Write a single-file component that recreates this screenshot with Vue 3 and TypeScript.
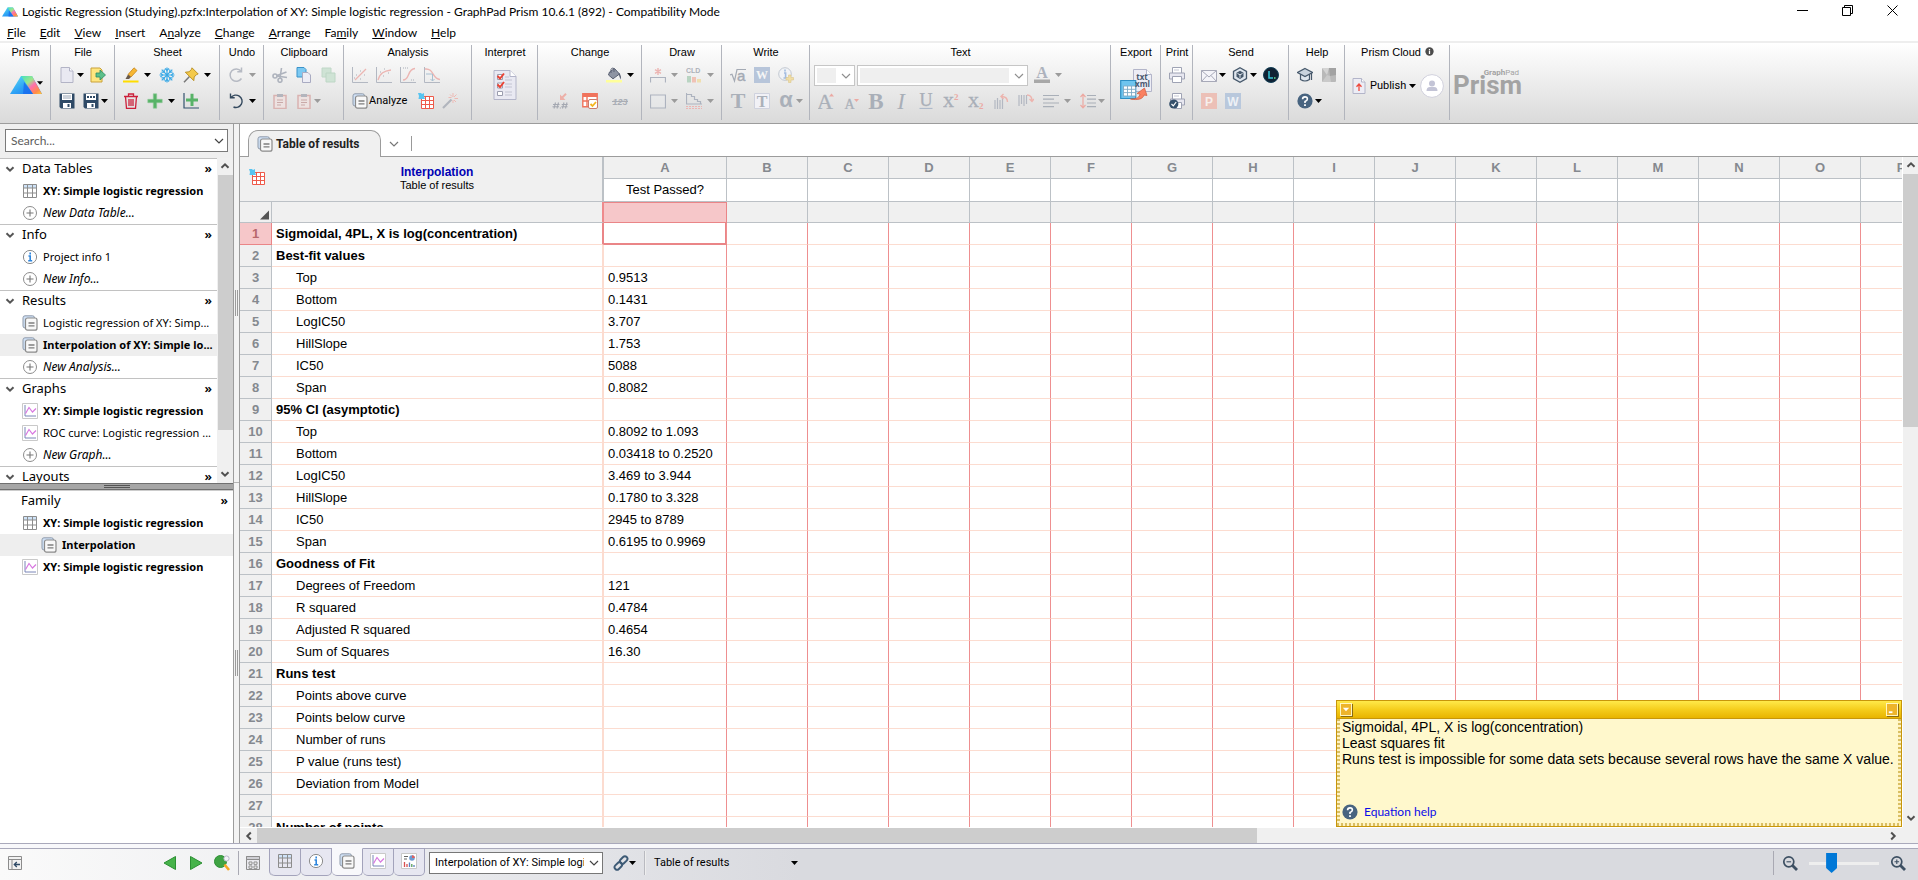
<script setup lang="ts">
import { ref } from 'vue'

interface Tool { icon: string; name: string; caret?: 'wide' | 'tight'; faded?: boolean; label?: string }
interface Group { id: string; title: string; rows: Tool[][] }
interface Item { icon: string; text: string; kind?: 'bold' | 'new'; active?: boolean; nested?: boolean }
interface Section { title: string; items: Item[] }
interface Row { label: string; value?: string; head?: boolean }

const t = (icon: string, name: string, caret?: 'wide' | 'tight', faded = false, label?: string): Tool =>
  ({ icon, name, caret, faded, label })

const menus: [string, string, string][] = [
  ['', 'F', 'ile'], ['', 'E', 'dit'], ['', 'V', 'iew'], ['', 'I', 'nsert'], ['A', 'n', 'alyze'],
  ['', 'C', 'hange'], ['', 'A', 'rrange'], ['Fa', 'm', 'ily'], ['', 'W', 'indow'], ['', 'H', 'elp'],
]

const leftGroups: Group[] = [
  { id: 'file', title: 'File', rows: [
    [t('doc', 'New', 'tight'), t('open', 'Open')],
    [t('save', 'Save'), t('saveas', 'Save as', 'tight')],
  ] },
  { id: 'sheet', title: 'Sheet', rows: [
    [t('marker', 'Highlight', 'wide'), t('snow', 'Freeze'), t('pin', 'Pin', 'wide')],
    [t('trash', 'Delete'), t('plus', 'New sheet', 'wide'), t('plusaxes', 'New graph')],
  ] },
  { id: 'undo', title: 'Undo', rows: [
    [t('redo', 'Redo', 'wide', true)],
    [t('undo', 'Undo', 'wide')],
  ] },
  { id: 'clip', title: 'Clipboard', rows: [
    [t('cut', 'Cut'), t('copy', 'Copy'), t('dup', 'Duplicate')],
    [t('paste', 'Paste'), t('paste', 'Paste special', 'tight', true)],
  ] },
  { id: 'analysis', title: 'Analysis', rows: [
    [t('fit1', 'Linear fit'), t('fit2', 'Curve fit'), t('fit3', 'Sigmoid fit'), t('fit4', 'Interpolate fit')],
    [t('results', 'Analyze', undefined, false, 'Analyze'), t('redtable', 'Analysis table'), t('wand', 'Wizard')],
  ] },
  { id: 'interpret', title: 'Interpret', rows: [] },
  { id: 'change', title: 'Change', rows: [
    [t('bucket', 'Fill', 'wide')],
    [t('decimals', 'Decimal format'), t('format', 'Format'), t('exclude', 'Exclude values')],
  ] },
  { id: 'draw', title: 'Draw', rows: [
    [t('bracket', 'Bracket', 'wide', true), t('cld', 'Letters display', 'wide', true)],
    [t('rect', 'Rectangle', 'wide', true), t('steps', 'Survival', 'wide', true)],
  ] },
  { id: 'write', title: 'Write', rows: [
    [t('root', 'Equation'), t('word', 'Word object'), t('infoadd', 'Add info')],
    [t('tee', 'Text'), t('teebox', 'Text box'), t('alpha', 'Symbol', 'tight', true)],
  ] },
]

const textTools: Tool[] = [
  t('bigger', 'Grow font'), t('smaller', 'Shrink font'), t('bold', 'Bold'), t('italic', 'Italic'),
  t('underline', 'Underline'), t('sup', 'Superscript'), t('sub', 'Subscript'), t('rotl', 'Rotate left'),
  t('rotr', 'Rotate right'), t('align', 'Align', 'wide', true), t('spacing', 'Line spacing', 'tight', true),
]

const rightGroups: Group[] = [
  { id: 'print', title: 'Print', rows: [[t('printer', 'Print')], [t('printok', 'Print all')]] },
  { id: 'send', title: 'Send', rows: [
    [t('mail', 'Mail', 'tight'), t('hex', 'Send to app', 'tight'), t('labarchives', 'LabArchives')],
    [t('ppt', 'PowerPoint'), t('wordlight', 'Word')],
  ] },
  { id: 'help', title: 'Help', rows: [
    [t('cap', 'Learn'), t('gem', 'Prism Academy')],
    [t('question', 'Help', 'tight')],
  ] },
]

const sections: Section[] = [
  { title: 'Data Tables', items: [
    { icon: 'sheet', text: 'XY: Simple logistic regression', kind: 'bold' },
    { icon: 'add', text: 'New Data Table...', kind: 'new' },
  ] },
  { title: 'Info', items: [
    { icon: 'info', text: 'Project info 1' },
    { icon: 'add', text: 'New Info...', kind: 'new' },
  ] },
  { title: 'Results', items: [
    { icon: 'results', text: 'Logistic regression of XY: Simp...' },
    { icon: 'results', text: 'Interpolation of XY: Simple lo...', kind: 'bold', active: true },
    { icon: 'add', text: 'New Analysis...', kind: 'new' },
  ] },
  { title: 'Graphs', items: [
    { icon: 'graph', text: 'XY: Simple logistic regression', kind: 'bold' },
    { icon: 'graph', text: 'ROC curve: Logistic regression ...' },
    { icon: 'add', text: 'New Graph...', kind: 'new' },
  ] },
  { title: 'Layouts', items: [] },
]

const family: Item[] = [
  { icon: 'sheet', text: 'XY: Simple logistic regression', kind: 'bold' },
  { icon: 'results', text: 'Interpolation', kind: 'bold', active: true, nested: true },
  { icon: 'graph', text: 'XY: Simple logistic regression', kind: 'bold' },
]

const columns = 'BCDEFGHIJKLMNOP'.split('')

const rows: Row[] = [
  { label: 'Sigmoidal, 4PL, X is log(concentration)', head: true },
  { label: 'Best-fit values', head: true },
  { label: 'Top', value: '0.9513' },
  { label: 'Bottom', value: '0.1431' },
  { label: 'LogIC50', value: '3.707' },
  { label: 'HillSlope', value: '1.753' },
  { label: 'IC50', value: '5088' },
  { label: 'Span', value: '0.8082' },
  { label: '95% CI (asymptotic)', head: true },
  { label: 'Top', value: '0.8092 to 1.093' },
  { label: 'Bottom', value: '0.03418 to 0.2520' },
  { label: 'LogIC50', value: '3.469 to 3.944' },
  { label: 'HillSlope', value: '0.1780 to 3.328' },
  { label: 'IC50', value: '2945 to 8789' },
  { label: 'Span', value: '0.6195 to 0.9969' },
  { label: 'Goodness of Fit', head: true },
  { label: 'Degrees of Freedom', value: '121' },
  { label: 'R squared', value: '0.4784' },
  { label: 'Adjusted R squared', value: '0.4654' },
  { label: 'Sum of Squares', value: '16.30' },
  { label: 'Runs test', head: true },
  { label: 'Points above curve' },
  { label: 'Points below curve' },
  { label: 'Number of runs' },
  { label: 'P value (runs test)' },
  { label: 'Deviation from Model' },
  { label: '' },
  { label: 'Number of points', head: true },
]

const sheetTabs = ['sheet', 'info', 'results', 'graph', 'layout']
const search = ref('')
const zoom = ref(29)
</script>

<template>
  <div class="app">
    <svg class="defs" aria-hidden="true">
      <defs>
        <linearGradient id="pl" x1="0" y1="0" x2="1" y2="1"><stop offset="0" stop-color="#5fe0f0" /><stop offset=".5" stop-color="#2fa4f5" /><stop offset="1" stop-color="#1c6ff2" /></linearGradient>
        <linearGradient id="pr" x1="0" y1="0" x2="1" y2="1"><stop offset="0" stop-color="#43e0c0" /><stop offset=".35" stop-color="#9be88a" /><stop offset=".55" stop-color="#ff6fae" /><stop offset=".8" stop-color="#ff8a4a" /><stop offset="1" stop-color="#ffc83c" /></linearGradient>
      </defs>
      <symbol id="prism" viewBox="0 0 32 18"><path d="M11 0H22L32 18H0z" fill="url(#pl)" /><path d="M11 0H22L32 18H23z" fill="url(#pr)" /><path d="M14 6L23 18H13z" fill="#1769ee" opacity=".75" /></symbol>
    </svg>
    <svg class="icons" aria-hidden="true">
      <symbol id="doc" viewBox="0 0 16 16"><path d="M2 .5h8.500l3.500 3.500V15.500H2z" fill="#e9e9f2" stroke="#b3b4c6" /><path d="M10.500 .5v3.500H14" fill="#fff" stroke="#b3b4c6" /></symbol>
      <symbol id="open" viewBox="0 0 16 16"><path d="M1 1h9l2 2v12H1z" fill="#ffe680" stroke="#c9a13a" /><path d="M6 6h4V3l5.500 5-5.500 5v-3H6z" fill="#5cc08a" stroke="#2c8a64" stroke-width=".8" /></symbol>
      <symbol id="save" viewBox="0 0 16 16"><path d="M.5 .5h15v15H2l-1.500-1.500z" fill="#2f4a66" /><path d="M3 1h10v6H3z" fill="#fff" /><path d="M4 3h8M4 5h8" stroke="#9aa6b5" /><path d="M4 10h8v5H4z" fill="#fff" /><path d="M8.500 11h2v3h-2z" fill="#2f4a66" /></symbol>
      <symbol id="saveas" viewBox="0 0 16 16"><path d="M.5 .5h15v15H2l-1.500-1.500z" fill="#2f4a66" /><path d="M3 1h10v6H3z" fill="#fff" /><path d="M4 4h8" stroke="#2f4a66" stroke-width="1.800" stroke-dasharray="2 1" /><path d="M4 10h8v5H4z" fill="#fff" /><path d="M8.500 11h2v3h-2z" fill="#2f4a66" /></symbol>
      <symbol id="marker" viewBox="0 0 16 16"><path d="M0 13.500h15.500V15.500H0z" fill="#ffdd00" /><path d="M5 7.500L11 .8l3 2.700-6 6.500z" fill="#f7b733" stroke="#c5841a" stroke-width=".8" /><path d="M5 7.500l3 2.500-2 2H2.500z" fill="#6a5a4a" /></symbol>
      <symbol id="snow" viewBox="0 0 16 16"><g stroke="#3aa9e6" stroke-width="1.200" fill="none"><path d="M8 .5v15M.5 8h15M2.700 2.700l10.600 10.600M13.300 2.700L2.700 13.300" /><path d="M6 1.500l2 2 2-2M6 14.500l2-2 2 2M1.500 6l2 2-2 2M14.500 6l-2 2 2 2M5.200 2.500v2.700H2.500M10.800 2.500v2.700h2.700M5.200 13.500v-2.700H2.500M10.800 13.500v-2.700h2.700" /></g></symbol>
      <symbol id="pin" viewBox="0 0 16 16"><path d="M6.500 9.500L1 15.200" stroke="#777" stroke-width="1.500" /><path d="M9 .8l6.200 6.200-1.700.6-2.300 2.400-.4 3.700L2.300 5.200l3.700-.4L8.400 2.500z" fill="#f3c94b" stroke="#b58b1e" stroke-width=".9" /></symbol>
      <symbol id="trash" viewBox="0 0 16 16"><g fill="none" stroke="#cc1f3a" stroke-width="1.300"><path d="M1 3.500h14M5.500 3V1h5v2M2.500 3.500l1 12h9l1-12M6 6v7M8 6v7M10 6v7" /></g></symbol>
      <symbol id="plus" viewBox="0 0 16 16"><path d="M6.300 .8h3.400v5.500h5.500v3.400H9.700v5.500H6.300V9.700H.8V6.300h5.500z" fill="#58b368" stroke="#8fca98" stroke-width=".6" /></symbol>
      <symbol id="plusaxes" viewBox="0 0 16 16"><path d="M1 0v15h15" fill="none" stroke="#34536e" stroke-width="1.200" /><path d="M7.500 .8h3v4.700h4.500v3h-4.500v4.500h-3V8.500H3V5.500h4.500z" fill="#58b368" /></symbol>
      <symbol id="redo" viewBox="0 0 16 16"><path d="M13 4A6.200 6.200 0 1 0 13.500 11.500M13.500 .5v4.200H9.300" fill="none" stroke="#b6bac3" stroke-width="1.500" /></symbol>
      <symbol id="undo" viewBox="0 0 16 16"><path d="M3 4.500A6.200 6.200 0 1 1 5.500 14M2.500 .5v4.200h4.200" fill="none" stroke="#34495e" stroke-width="1.400" /></symbol>
      <symbol id="cut" viewBox="0 0 16 16"><g fill="none" stroke="#aeb3bd" stroke-width="1.600"><circle cx="3" cy="9" r="2" /><circle cx="8" cy="13.300" r="2" /><path d="M5 8.500L14.500 5M8 11.200L9.500 1M5 9l10 1.500" /></g></symbol>
      <symbol id="copy" viewBox="0 0 16 16"><path d="M1 .5h7l2 2V10H1z" fill="#7cc9f2" stroke="#3b93c9" /><path d="M6.500 5.500H12l2.500 2.500v7.500h-8z" fill="#ededf5" stroke="#a9abc2" /></symbol>
      <symbol id="dup" viewBox="0 0 16 16"><path d="M2 1h9v9H2z" fill="#cfe3d5" stroke="#c0d8c8" /><path d="M6 6h9v9H6z" fill="#cfe3d5" stroke="#bdd6c5" /></symbol>
      <symbol id="paste" viewBox="0 0 16 16"><path d="M2 2.500h12v13H2z" fill="#ede2e1" stroke="#d9b3b1" stroke-width="1.500" /><path d="M5 1h6v3H5z" fill="#b3b5bd" /><path d="M5 7h6M5 9.500h6M5 12h4" stroke="#c9a9a8" /></symbol>
      <symbol id="fit1" viewBox="0 0 16 16"><path d="M.5 0v15.500H16" fill="none" stroke="#b3b8c2" /><path d="M3 13L14 2" stroke="#ecb5b2" stroke-width="1.300" /><path d="M4 8h1M8 4h1M8 12h1M12 8h1M2 11h1" stroke="#a9aeb8" /></symbol>
      <symbol id="fit2" viewBox="0 0 16 16"><path d="M.5 0v15.500H16" fill="none" stroke="#b3b8c2" /><path d="M2 13C4 6 8 4 15 3" fill="none" stroke="#ecb5b2" stroke-width="1.300" /><path d="M4 5h1M8 2h1M7 9h1M12 6h1" stroke="#a9aeb8" /></symbol>
      <symbol id="fit3" viewBox="0 0 16 16"><path d="M.5 0v15.500H16" fill="none" stroke="#b3b8c2" /><path d="M3 13c7 0 4-11 12-11.500" fill="none" stroke="#ecb5b2" stroke-width="1.400" /><path d="M3 1h5M11 13h4" stroke="#a9aeb8" stroke-dasharray="1 1" /></symbol>
      <symbol id="fit4" viewBox="0 0 16 16"><path d="M.5 0v15.500H16" fill="none" stroke="#b3b8c2" /><path d="M1 2c9-1 7 10 15 10.500" fill="none" stroke="#ecb5b2" stroke-width="1.400" /><path d="M2 7h6M8.500 7v7M6.500 12l2 2 2-2" fill="none" stroke="#a8bfd0" /></symbol>
      <symbol id="results" viewBox="0 0 16 16"><rect x="1" y=".8" width="11.500" height="12.200" rx="2" fill="#cfe0f5" stroke="#8f9bab" /><rect x="3.500" y="3" width="11.500" height="12.200" rx="2" fill="#f8f8f8" stroke="#8a8a8a" stroke-width="1.200" /><path d="M6.500 8h6M6.500 10.800h6" stroke="#7d7d7d" stroke-width="1.300" /></symbol>
      <symbol id="redtable" viewBox="0 0 16 16"><path d="M3.500 3.500h12v12h-12zM3.500 7.500h12M3.500 11.500h12M7.500 3.500v12M11.500 3.500v12" fill="#fff" stroke="#ee5a4a" stroke-width="1" /><path d="M0 0h3l1 1 2-1v3l1 3H4L.5 6 1 3z" fill="#58c4f0" /></symbol>
      <symbol id="wand" viewBox="0 0 16 16"><path d="M1 15L9.500 6.500" stroke="#b1b5bd" stroke-width="2.200" /><path d="M11 0v4M11 7v3M6.500 4.500h3M12.500 5.500H16M8 1.500l2 2M14.500 1.500l-2.500 2.500M14 9l-2-2" stroke="#edb9b3" /></symbol>
      <symbol id="checklist" viewBox="0 0 24 30"><path d="M1 .5h16l6 6v23H1z" fill="#e9e9f2" stroke="#b3b5c9" /><path d="M17 .5v6h6" fill="#fff" stroke="#b3b5c9" /><path d="M4.500 4.500h5v5h-5zM4.500 13h5v5h-5zM4.500 21.500h5v4h-5z" fill="#fff" stroke="#9b9dae" /><path d="M4.500 6l2.500 2.500L11 3.500M4.500 14.500l2.500 2.500 4-5" fill="none" stroke="#ea4335" stroke-width="2" /><path d="M12 7h4M12 10h7M12 14h7M12 17h7M12 22h7M12 25h7" stroke="#c3c4d2" /></symbol>
      <symbol id="bucket" viewBox="0 0 16 16"><path d="M0 13h16v2.500H0z" fill="#ffff9a" /><path d="M3.500 5L8.500 1.500l5 5.500-6.500 4.800L2.500 8z" fill="#8e94a3" stroke="#5a6173" /><path d="M5 6V2.500Q6 0 8 1.500V5" fill="none" stroke="#5a6173" /><path d="M13 6q3 3 1.500 6.500L12.500 7z" fill="#5a6173" /></symbol>
      <symbol id="decimals" viewBox="0 0 16 16"><path d="M3.500 9.500L2 15.500M6.500 9.500L5 15.500M1 11.500h6.500M.5 13.700H7M12 9.500l-1.500 6M15 9.500l-1.500 6M9.700 11.500h6M9.300 13.700h6.200M7.800 15h1.200" stroke="#a4a8b1" stroke-width="1.100" fill="none" /><path d="M14 .8L9.500 5.200" stroke="#edb0a8" stroke-width="2" /><path d="M8 1.500v5.500h5.500z" fill="#edb0a8" /></symbol>
      <symbol id="format" viewBox="0 0 16 16"><path d="M.8 .8h14.400v13H.8zM.8 8h14M5 4v10" fill="#fff" stroke="#f0735c" stroke-width="1.400" /><path d="M.8 .8h14.400V4H.8z" fill="#f0735c" /><rect x="6.500" y="6.500" width="9" height="9" rx="1.500" fill="#fff" stroke="#c97b6c" /><path d="M8.500 11l2 2 3.500-4" fill="none" stroke="#f5b51e" stroke-width="1.800" /></symbol>
      <symbol id="exclude" viewBox="0 0 16 16"><text x="8" y="11.500" font-size="9" font-weight="bold" font-style="italic" text-anchor="middle" fill="#a9adb5" font-family="Liberation Sans, sans-serif">123</text><path d="M0 8.500h16" stroke="#a9adb5" /></symbol>
      <symbol id="bracket" viewBox="0 0 16 16"><path d="M.5 15.500V10.500h15v5" fill="none" stroke="#adb3bf" stroke-width="1.200" /><path d="M8 1v7M5 2.700l6 3.600M11 2.700L5 6.300" stroke="#ecb5b2" stroke-width="1.400" /></symbol>
      <symbol id="cld" viewBox="0 0 16 16"><text x="0" y="6" font-size="7" font-weight="bold" fill="#adb1b9" font-family="Liberation Sans, sans-serif">CLD</text><path d="M1 9h4v6.500H1z" fill="#b9d4c2" /><path d="M6 10h4v5.500H6z" fill="#f0c2b6" /><path d="M11 12h4v3.500h-4z" fill="#efdfb0" /></symbol>
      <symbol id="rect" viewBox="0 0 16 16"><path d="M.5 2h15v13H.5z" fill="#e9ebee" fill-opacity=".5" stroke="#adb3bf" stroke-width="1.200" /></symbol>
      <symbol id="steps" viewBox="0 0 16 16"><path d="M.5 0v11H16M.5 1.500h5v2h3v3h3v2h3v2.500" fill="none" stroke="#adb3bf" stroke-width="1.200" /><path d="M0 13.500h16M0 15.500h16" stroke="#ecb5b2" stroke-dasharray="2 1" /></symbol>
      <symbol id="root" viewBox="0 0 16 16"><path d="M0 8l2-.8L4.500 14 7 2.500h9" fill="none" stroke="#a4aab4" stroke-width="1.200" /><text x="7" y="13.500" font-size="15" fill="#a4aab4" stroke="#a4aab4" stroke-width=".4" font-family="Liberation Sans, sans-serif">a</text></symbol>
      <symbol id="word" viewBox="0 0 16 16"><path d="M0 0h16v16H0z" fill="#b7c5da" /><text x="8" y="12.300" font-size="12" font-weight="bold" text-anchor="middle" fill="#f5f5f5" font-family="Liberation Serif, serif">W</text></symbol>
      <symbol id="infoadd" viewBox="0 0 16 16"><circle cx="7" cy="7" r="6.300" fill="#f1f3f6" stroke="#c2c8d2" /><path d="M6 6h1.600v5M5.500 11h4M7 2.500v2" fill="none" stroke="#a3bce0" stroke-width="1.600" /><path d="M10.500 8h2.500v2.500h2.500V13H13v2.500h-2.500V13H8v-2.500h2.500z" fill="#f0dda6" stroke="#dcc68c" stroke-width=".6" /></symbol>
      <symbol id="tee" viewBox="0 0 16 16"><text x="8" y="15" font-size="22" font-weight="bold" text-anchor="middle" fill="#aab0b9" font-family="Liberation Serif, serif">T</text></symbol>
      <symbol id="teebox" viewBox="0 0 16 16"><path d="M.5 .5h15v15H.5z" fill="#f1f1f6" stroke="#cfd2de" /><text x="8" y="13.500" font-size="16" font-weight="bold" text-anchor="middle" fill="#aab0b9" font-family="Liberation Serif, serif">T</text></symbol>
      <symbol id="alpha" viewBox="0 0 16 16"><text x="8" y="14" font-size="22" font-weight="bold" text-anchor="middle" fill="#aab0b9" font-family="Liberation Sans, sans-serif">α</text></symbol>
      <symbol id="fontcolor" viewBox="0 0 16 16"><text x="8" y="11" font-size="16" font-weight="bold" text-anchor="middle" fill="#adb2bd" font-family="Liberation Serif, serif">A</text><path d="M0 12.500h16V16H0z" fill="#a8a8a8" /></symbol>
      <symbol id="bigger" viewBox="0 0 16 16"><text x="7" y="15.500" font-size="22" text-anchor="middle" fill="#aab0b9" stroke="#aab0b9" stroke-width=".3" font-family="Liberation Serif, serif">A</text><path d="M11 3.500L13.500 .5 16 3.500z" fill="#eba9a3" /></symbol>
      <symbol id="smaller" viewBox="0 0 16 16"><text x="6.500" y="15.500" font-size="14" text-anchor="middle" fill="#aab0b9" stroke="#aab0b9" stroke-width=".3" font-family="Liberation Serif, serif">A</text><path d="M11 6L13.500 9 16 6z" fill="#eba9a3" /></symbol>
      <symbol id="bold" viewBox="0 0 16 16"><text x="8" y="15.500" font-size="23" font-weight="bold" text-anchor="middle" fill="#a9afb8" font-family="Liberation Serif, serif">B</text></symbol>
      <symbol id="italic" viewBox="0 0 16 16"><text x="8" y="15.500" font-size="23" font-style="italic" text-anchor="middle" fill="#a9afb8" font-family="Liberation Serif, serif">I</text></symbol>
      <symbol id="underline" viewBox="0 0 16 16"><text x="8" y="12.500" font-size="18" text-anchor="middle" fill="#a9afb8" stroke="#a9afb8" stroke-width=".3" font-family="Liberation Serif, serif">U</text><path d="M1.500 15.400h13" stroke="#a9b6c8" /></symbol>
      <symbol id="sup" viewBox="0 0 16 16"><text x="0" y="14" font-size="22" fill="#a9afb8" stroke="#a9afb8" stroke-width=".3" font-family="Liberation Serif, serif">x</text><text x="11" y="6.500" font-size="9" font-weight="bold" fill="#eba9a3" font-family="Liberation Serif, serif">2</text></symbol>
      <symbol id="sub" viewBox="0 0 16 16"><text x="0" y="14" font-size="22" fill="#a9afb8" stroke="#a9afb8" stroke-width=".3" font-family="Liberation Serif, serif">x</text><text x="11" y="15.800" font-size="9" font-weight="bold" fill="#eba9a3" font-family="Liberation Serif, serif">2</text></symbol>
      <symbol id="rotl" viewBox="0 0 16 16"><path d="M2 7v9M4.500 5v11M7 7v9M9.500 5v11" stroke="#b3b8c2" stroke-width="1.200" /><path d="M14.500 9c0-4-2-5.500-6-5.500M10.500 1L8 3.500 10.500 6" fill="none" stroke="#edb4ae" stroke-width="1.400" /></symbol>
      <symbol id="rotr" viewBox="0 0 16 16"><path d="M1 2v11M3.500 2v9M6 2v11M8.500 2v9" stroke="#b3b8c2" stroke-width="1.200" /><path d="M9 2c4 0 5 2 5 6M11.500 6L14 8.500 16 6" fill="none" stroke="#edb4ae" stroke-width="1.400" /></symbol>
      <symbol id="align" viewBox="0 0 16 16"><path d="M0 2.500h16M0 6.200h11M0 10h16M0 13.700h11" stroke="#a9afb8" stroke-width="1.200" /></symbol>
      <symbol id="spacing" viewBox="0 0 16 16"><path d="M3 1.500v13M.5 4L3 1.200 5.500 4M.5 12L3 14.800 5.500 12" fill="none" stroke="#eda9a2" stroke-width="1.200" /><path d="M7 2.500h9M7 6.200h9M7 10h9M7 13.700h9" stroke="#a9afb8" stroke-width="1.200" /></symbol>
      <symbol id="export" viewBox="0 0 32 32"><path d="M13.500 .5h13l5 5v17h-18z" fill="#ededf5" stroke="#b3b5c9" /><path d="M26.500 .5v5h5" fill="#fff" stroke="#b3b5c9" /><path d="M.7 11.500h15v18h-15z" fill="#6ec4ee" stroke="#2e8fc4" stroke-width="1.200" /><path d="M3.500 17h12v10h-12zM3.500 20.300h12M3.500 23.600h12M7.500 17v10M11.500 17v10" fill="#fff" stroke="#7da9c4" stroke-width=".9" /><text x="22" y="10.500" font-size="8" font-weight="bold" text-anchor="middle" fill="#4b5870" font-family="Open Sans, sans-serif">txt</text><text x="22.500" y="18" font-size="8" font-weight="bold" text-anchor="middle" fill="#4b5870" font-family="Open Sans, sans-serif">xml</text><path d="M10.500 30c7 0 9-2 9.500-5l-3-.5L24.500 19l2.500 7.500-3-.5c-1 4-6 5.500-13.500 4z" fill="#fa8060" stroke="#cf5a3e" stroke-width=".7" /></symbol>
      <symbol id="printer" viewBox="0 0 16 16"><path d="M3.500 .5h9v6h-9z" fill="#fff" stroke="#9fa3b4" /><path d="M5 3h5" stroke="#c5c7d2" /><path d="M.5 6h15v6H.5z" fill="#e7e7f0" stroke="#9fa3b4" /><path d="M3.500 9.500h9v6h-9z" fill="#fff" stroke="#9fa3b4" /></symbol>
      <symbol id="printok" viewBox="0 0 16 16"><path d="M3.500 .5h9v6h-9z" fill="#fff" stroke="#9fa3b4" /><path d="M5 3h5" stroke="#c5c7d2" /><path d="M1.500 6h14v6h-14z" fill="#e7e7f0" stroke="#9fa3b4" /><path d="M5.500 9.500h7v6h-7z" fill="#fff" stroke="#9fa3b4" /><circle cx="4.800" cy="11" r="4.600" fill="#35506b" /><path d="M2.500 11l1.800 1.800L7.200 9" fill="none" stroke="#fff" stroke-width="1.200" /></symbol>
      <symbol id="mail" viewBox="0 0 16 16"><path d="M.5 3.500h15v11H.5z" fill="#f4f4f9" stroke="#a7a9b8" /><path d="M.5 3.500L8 10l7.500-6.500M.5 14.500l5.500-6M15.500 14.500L10 8.500" fill="none" stroke="#a7a9b8" /></symbol>
      <symbol id="hex" viewBox="0 0 16 16"><path d="M8 .8l6.500 3.700v7L8 15.200 1.500 11.500v-7z" fill="#dfe6ee" stroke="#46586b" stroke-width="1.300" /><path d="M8 3.800l3.500 2v4L8 12l-3.500-2.200v-4z" fill="#46586b" /><path d="M5.500 6.500L8 7.800l2.500-1.300M8 7.800v3" fill="none" stroke="#dfe6ee" /></symbol>
      <symbol id="labarchives" viewBox="0 0 16 16"><circle cx="8" cy="8" r="7.500" fill="#0f2133" stroke="#123e55" /><path d="M6 4v7h4" fill="none" stroke="#35c4d6" stroke-width="1.500" /><path d="M11 11h1.500" stroke="#5fe08a" stroke-width="1.500" /></symbol>
      <symbol id="ppt" viewBox="0 0 16 16"><path d="M0 0h16v16H0z" fill="#ecc0b7" /><text x="8" y="12.500" font-size="12" font-weight="bold" text-anchor="middle" fill="#f7efed" font-family="Liberation Sans, sans-serif">P</text></symbol>
      <symbol id="wordlight" viewBox="0 0 16 16"><path d="M0 0h16v16H0z" fill="#b9c8dc" /><text x="8" y="12.500" font-size="12" font-weight="bold" text-anchor="middle" fill="#eef1f6" font-family="Liberation Sans, sans-serif">W</text></symbol>
      <symbol id="cap" viewBox="0 0 16 16"><path d="M3.500 7v5.500q4.500 3 9 0V7" fill="#dfe6ee" stroke="#46586b" stroke-width="1.200" /><path d="M8 1.500L15.500 5.500 8 9.500.5 5.500z" fill="#c9d3de" stroke="#46586b" stroke-width="1.200" /><path d="M14.500 6v7" stroke="#46586b" stroke-width="1.200" /></symbol>
      <symbol id="gem" viewBox="0 0 16 16"><rect x="1" y="1" width="14" height="14" rx="1" fill="#b9b9b9" /><path d="M1 1h7L6 8z" fill="#d4d4d4" /><path d="M8 1h7v7L9 9z" fill="#a2a2a2" /><path d="M1 15l5-7 3 1 1 6z" fill="#cacaca" /></symbol>
      <symbol id="question" viewBox="0 0 16 16"><circle cx="8" cy="8" r="7.600" fill="#486480" /><path d="M5.600 6.200Q5.600 3.900 8 3.900t2.400 2.200Q10.400 7.500 8 8.600V10" fill="none" stroke="#fff" stroke-width="1.600" /><path d="M7.100 11.200h1.800v1.700H7.100z" fill="#fff" /></symbol>
      <symbol id="publish" viewBox="0 0 16 16"><path d="M2 .5h8.500L14 4v11.500H2z" fill="#ededf5" stroke="#b3b5c9" /><path d="M10.500 .5V4H14" fill="#fff" stroke="#b3b5c9" /><path d="M8 13V6.500M5.500 8.800L8 6l2.500 2.800" fill="none" stroke="#ee4b3e" stroke-width="1.300" /></symbol>
      <symbol id="avatar" viewBox="0 0 24 24"><circle cx="12" cy="12" r="11.400" fill="#fff" stroke="#d0d0dc" /><circle cx="12" cy="9.500" r="3" fill="#c3c4d6" /><path d="M6.500 17q0-4 3.500-4h4q3.500 0 3.500 4z" fill="#c3c4d6" /></symbol>
      <symbol id="dot-info" viewBox="0 0 10 10"><circle cx="5" cy="5" r="4.600" fill="#4c4c4c" /><path d="M5 4.300v3.400M5 2.200v1.300" stroke="#fff" stroke-width="1.400" /></symbol>
      <symbol id="sheet" viewBox="0 0 16 16"><path d="M1.500 1.500h13v3.500h-13z" fill="#cfe3f8" /><path d="M1.500 1.500h13v13h-13zM1.500 5h13M1.500 10h13M5.500 1.500v13M10.500 1.500v13" fill="none" stroke="#8c8c8c" /></symbol>
      <symbol id="add" viewBox="0 0 16 16"><circle cx="8" cy="8" r="6.500" fill="#fff" stroke="#8c8c8c" /><path d="M8 4.500v7M4.500 8h7" stroke="#777" stroke-width="1.100" /></symbol>
      <symbol id="info" viewBox="0 0 16 16"><circle cx="8" cy="8" r="6.600" fill="#fff" stroke="#8c8c8c" /><path d="M8.200 3.500v1.900M6.500 7h1.700v4.500M6.200 11.700h4" fill="none" stroke="#2f86dd" stroke-width="1.600" /></symbol>
      <symbol id="graph" viewBox="0 0 16 16"><path d="M.5 .5h15v15H.5z" fill="#fff" stroke="#c9c9c9" /><path d="M3 2v11h11" fill="none" stroke="#7a86b8" /><path d="M3.500 10.500L7 4.500l3.500 4.500 3.500-3.500" fill="none" stroke="#d878e0" stroke-width="1.200" /></symbol>
      <symbol id="layout" viewBox="0 0 16 16"><path d="M.5 .5h15v15H.5z" fill="#fff" stroke="#c9c9c9" /><path d="M3 3.500h4M3 6h3" stroke="#666" /><circle cx="11" cy="5" r="2.800" fill="#6f9ad0" /><path d="M11 5V2.200A2.800 2.800 0 0 1 13.800 5z" fill="#e06060" /><path d="M3.500 14v-5M6 14v-3" stroke="#d85050" stroke-width="1.300" /><path d="M8.500 14V9.500M13 14v-2" stroke="#5a7fc0" stroke-width="1.300" /><path d="M10.800 14v-3" stroke="#5aa05a" stroke-width="1.300" /></symbol>
      <symbol id="collapse" viewBox="0 0 16 16"><path d="M1.500 1.500h13v13h-13zM1.500 4.500h13M5 4.500v10" fill="#f2f2f2" stroke="#8c8c8c" /><path d="M13 9.500H7.500M9.800 7L7.300 9.500l2.500 2.500" fill="none" stroke="#2f4a66" stroke-width="1.300" /></symbol>
      <symbol id="prev" viewBox="0 0 16 16"><path d="M13.500 1.500v13L2 8z" fill="#46b34a" stroke="#2c8f33" /></symbol>
      <symbol id="next" viewBox="0 0 16 16"><path d="M2.500 1.500v13L14 8z" fill="#46b34a" stroke="#2c8f33" /></symbol>
      <symbol id="find" viewBox="0 0 16 16"><circle cx="6.500" cy="6.500" r="6" fill="#3fa343" stroke="#2c8f33" /><circle cx="12.500" cy="3.500" r="2.600" fill="#f3f3f8" stroke="#b8b8c8" /><path d="M10.500 9.500l4.500 5.500" stroke="#f5a623" stroke-width="2.600" /></symbol>
      <symbol id="panel" viewBox="0 0 16 16"><path d="M1.500 1.500h13v13h-13z" fill="#e9e9ee" stroke="#8c8c8c" /><path d="M1.500 1.500h13V4.500h-13z" fill="#cfcfd4" stroke="#8c8c8c" /><path d="M4 7h3v2.300H4zM9 7h3v2.300H9zM4 11h3v2.300H4zM9 11h3v2.300H9z" fill="#fff" stroke="#8c8c8c" /></symbol>
      <symbol id="chain" viewBox="0 0 16 16"><g fill="none" stroke="#3d5a75" stroke-width="1.900"><rect x="8.200" y=".8" width="5" height="8.500" rx="2.500" transform="rotate(45 10.700 5)" /><rect x="2.800" y="6.700" width="5" height="8.500" rx="2.500" transform="rotate(45 5.300 11)" /></g></symbol>
      <symbol id="zoomout" viewBox="0 0 16 16"><circle cx="6.800" cy="6.800" r="5" fill="none" stroke="#3d4f62" stroke-width="1.700" /><path d="M10.500 10.500L15 15" stroke="#3d4f62" stroke-width="2.800" /><path d="M4.500 6.800h4.600" stroke="#3d4f62" stroke-width="1.100" /></symbol>
      <symbol id="zoomin" viewBox="0 0 16 16"><circle cx="6.800" cy="6.800" r="5" fill="none" stroke="#3d4f62" stroke-width="1.700" /><path d="M10.500 10.500L15 15" stroke="#3d4f62" stroke-width="2.800" /><path d="M4.500 6.800h4.600M6.800 4.500v4.600" stroke="#3d4f62" stroke-width="1.100" /></symbol>
      <symbol id="chev-down" viewBox="0 0 10 10"><path d="M1 3l4 4 4-4" fill="none" stroke="currentColor" stroke-width="1.200" /></symbol>
      <symbol id="arrow-down" viewBox="0 0 10 10"><path d="M1.500 3.200L5 6.700l3.500-3.500" fill="none" stroke="currentColor" stroke-width="2" /></symbol>
      <symbol id="arrow-up" viewBox="0 0 10 10"><path d="M1.500 6.800L5 3.300l3.500 3.500" fill="none" stroke="currentColor" stroke-width="2" /></symbol>
      <symbol id="arrow-left" viewBox="0 0 10 10"><path d="M6.800 1.500L3.300 5l3.500 3.500" fill="none" stroke="currentColor" stroke-width="2" /></symbol>
      <symbol id="arrow-right" viewBox="0 0 10 10"><path d="M3.200 1.500L6.700 5 3.200 8.500" fill="none" stroke="currentColor" stroke-width="2" /></symbol>
      <symbol id="caret" viewBox="0 0 7 4"><path d="M0 0h7L3.500 4z" fill="currentColor" /></symbol>
    </svg>

    <header class="titlebar">
      <svg class="logo-small"><use href="#prism" /></svg>
      <h1>Logistic Regression (Studying).pzfx:Interpolation of XY: Simple logistic regression - GraphPad Prism 10.6.1 (892) - Compatibility Mode</h1>
      <div class="window-buttons">
        <button aria-label="Minimize"><svg viewBox="0 0 11 11"><path d="M0 5.500h11" stroke="#000" /></svg></button>
        <button aria-label="Restore"><svg viewBox="0 0 11 11"><path d="M.5 2.500h8v8h-8zM2.500 2.500v-2h8v8h-2" fill="none" stroke="#000" /></svg></button>
        <button aria-label="Close"><svg viewBox="0 0 11 11"><path d="M.5 .5l10 10M10.500 .5l-10 10" stroke="#000" /></svg></button>
      </div>
    </header>

    <nav class="menubar" aria-label="Main menu">
      <button v-for="m in menus" :key="m.join('')">{{ m[0] }}<u>{{ m[1] }}</u>{{ m[2] }}</button>
    </nav>

    <div class="toolbar" role="toolbar" aria-label="Tools">
      <section class="group g-prism">
        <h2>Prism</h2>
        <button class="big" aria-label="Prism">
          <svg class="logo-large"><use href="#prism" /></svg>
          <svg class="caret logo-caret"><use href="#caret" /></svg>
        </button>
      </section>

      <section v-for="g in leftGroups" :key="g.id" class="group" :class="'g-' + g.id">
        <h2>{{ g.title }}</h2>
        <button v-if="g.id === 'interpret'" class="big" aria-label="Interpret">
          <svg class="checklist"><use href="#checklist" /></svg>
        </button>
        <div v-for="(r, ri) in g.rows" :key="ri" class="row">
          <button v-for="b in r" :key="b.name" class="tool" :class="[b.caret, { faded: b.faded }]" :aria-label="b.name">
            <svg class="ic"><use :href="'#' + b.icon" /></svg>
            <span v-if="b.label">{{ b.label }}</span>
            <svg v-if="b.caret" class="caret"><use href="#caret" /></svg>
          </button>
        </div>
      </section>

      <section class="group g-text">
        <h2>Text</h2>
        <div class="row">
          <span class="combo small"><select disabled aria-label="Font size"></select><svg><use href="#chev-down" /></svg></span>
          <span class="combo"><select disabled aria-label="Font name"></select><svg><use href="#chev-down" /></svg></span>
          <button class="tool wide faded" aria-label="Font colour">
            <svg class="ic"><use href="#fontcolor" /></svg>
            <svg class="caret"><use href="#caret" /></svg>
          </button>
        </div>
        <div class="row spaced">
          <button v-for="b in textTools" :key="b.name" class="tool" :class="[b.caret, { faded: b.faded }]" :aria-label="b.name">
            <svg class="ic"><use :href="'#' + b.icon" /></svg>
            <svg v-if="b.caret" class="caret"><use href="#caret" /></svg>
          </button>
        </div>
      </section>

      <section class="group g-export">
        <h2>Export</h2>
        <button class="big" aria-label="Export"><svg class="export"><use href="#export" /></svg></button>
      </section>

      <section v-for="g in rightGroups" :key="g.id" class="group" :class="'g-' + g.id">
        <h2>{{ g.title }}</h2>
        <div v-for="(r, ri) in g.rows" :key="ri" class="row">
          <button v-for="b in r" :key="b.name" class="tool" :class="b.caret" :aria-label="b.name">
            <svg class="ic"><use :href="'#' + b.icon" /></svg>
            <svg v-if="b.caret" class="caret"><use href="#caret" /></svg>
          </button>
        </div>
      </section>

      <section class="group g-cloud">
        <h2>Prism Cloud <svg class="dot"><use href="#dot-info" /></svg></h2>
        <div class="cloud-row">
          <button class="publish">
            <svg class="ic"><use href="#publish" /></svg>
            Publish
            <svg class="caret"><use href="#caret" /></svg>
          </button>
          <button class="account" aria-label="Account"><svg><use href="#avatar" /></svg></button>
        </div>
      </section>

      <div class="brand"><small>Graph<i>Pad</i></small><strong>Prism</strong></div>
    </div>

    <div class="workspace">
      <aside class="sidebar">
        <div class="search">
          <input v-model="search" type="text" placeholder="Search..." aria-label="Search" />
          <button aria-label="Search options"><svg><use href="#chev-down" /></svg></button>
        </div>
        <div class="tree-wrap">
          <nav class="tree" aria-label="Navigator">
            <section v-for="s in sections" :key="s.title">
              <h3>
                <svg><use href="#arrow-down" /></svg>
                <span>{{ s.title }}</span>
                <button :aria-label="'More ' + s.title">»</button>
              </h3>
              <ul>
                <li v-for="i in s.items" :key="i.text">
                  <button class="item" :class="[i.kind, { active: i.active }]"><svg><use :href="'#' + i.icon" /></svg><span>{{ i.text }}</span></button>
                </li>
              </ul>
            </section>
          </nav>
          <div class="vscroll"><svg><use href="#arrow-up" /></svg><div class="thumb"></div><svg><use href="#arrow-down" /></svg></div>
        </div>
        <div class="hsplit"><span></span></div>
        <section class="family">
          <h3><span>Family</span><button aria-label="More Family">»</button></h3>
          <ul>
            <li v-for="(i, n) in family" :key="n">
              <button class="item" :class="[i.kind, { active: i.active, nested: i.nested }]"><svg><use :href="'#' + i.icon" /></svg><span>{{ i.text }}</span></button>
            </li>
          </ul>
        </section>
      </aside>

      <div class="vsplit"><div><span></span></div><div><span></span></div></div>

      <main class="content">
        <div class="tabs">
          <button class="tab"><svg><use href="#results" /></svg>Table of results</button>
          <button class="tab-menu" aria-label="All tabs"><svg><use href="#chev-down" /></svg></button>
          <span class="tab-end"></span>
        </div>
        <div class="view">
          <table>
            <colgroup>
              <col class="c-num" /><col class="c-label" /><col class="c-a" />
              <col v-for="c in columns" :key="c" class="c-x" />
            </colgroup>
            <thead>
              <tr class="letters">
                <th rowspan="2" class="corner"><svg><use href="#redtable" /></svg></th>
                <th rowspan="2" class="name"><b>Interpolation</b><span>Table of results</span></th>
                <th>A</th>
                <th v-for="c in columns" :key="c">{{ c }}</th>
              </tr>
              <tr class="titles">
                <th>Test Passed?</th>
                <th v-for="c in columns" :key="c"></th>
              </tr>
              <tr class="subs">
                <th class="select-all"><svg viewBox="0 0 10 10"><path d="M10 0v10H0z" fill="#555" /></svg></th>
                <th class="sub-name"></th>
                <th class="hot"></th>
                <th v-for="c in columns" :key="c"></th>
              </tr>
            </thead>
            <tbody>
              <tr v-for="(r, n) in rows" :key="n">
                <th scope="row" :class="{ current: n === 0 }">{{ n + 1 }}</th>
                <td class="label" :class="{ head: r.head, 'by-cursor': n === 0 }">{{ r.label }}</td>
                <td class="value" :class="{ cursor: n === 0 }">{{ r.value }}</td>
                <td v-for="c in columns" :key="c"></td>
              </tr>
            </tbody>
          </table>

          <section class="note">
            <div class="note-bar">
              <button aria-label="Note menu"><svg viewBox="0 0 11 12"><path d="M2 4h7L5.500 8z" fill="#fff" /></svg></button>
              <button aria-label="Minimize note"><svg viewBox="0 0 11 12"><path d="M2 8h4v2H2z" fill="#fff" /></svg></button>
            </div>
            <div class="note-frame">
              <div class="note-body">
                <p>Sigmoidal, 4PL, X is log(concentration)<br />Least squares fit<br />Runs test is impossible for some data sets because several rows have the same X value.</p>
                <a href="#equation-help"><svg><use href="#question" /></svg>Equation help</a>
              </div>
            </div>
          </section>
        </div>
        <div class="vscroll main-v"><svg><use href="#arrow-up" /></svg><div class="thumb"></div><svg><use href="#arrow-down" /></svg></div>
        <div class="hscroll"><svg><use href="#arrow-left" /></svg><div class="thumb"></div><svg><use href="#arrow-right" /></svg></div>
        <div class="scroll-corner"></div>
      </main>
    </div>

    <footer class="status">
      <button class="sbtn first" aria-label="Collapse navigator"><svg><use href="#collapse" /></svg></button>
      <button class="sbtn" aria-label="Previous"><svg><use href="#prev" /></svg></button>
      <button class="sbtn" aria-label="Next"><svg><use href="#next" /></svg></button>
      <button class="sbtn" aria-label="Find"><svg><use href="#find" /></svg></button>
      <span class="rule"></span>
      <button class="sbtn grid" aria-label="Gallery"><svg><use href="#panel" /></svg></button>
      <div class="sheet-tabs">
        <button v-for="s in sheetTabs" :key="s" :class="{ on: s === 'results' }" :aria-label="s"><svg><use :href="'#' + s" /></svg></button>
      </div>
      <span class="sheet-select">
        <select aria-label="Sheet"><option>Interpolation of XY: Simple logistic regression</option></select>
        <svg><use href="#chev-down" /></svg>
      </span>
      <button class="chain" aria-label="Linked sheets"><svg class="ic"><use href="#chain" /></svg><svg class="caret"><use href="#caret" /></svg></button>
      <span class="rule light"></span>
      <button class="page">Table of results <svg class="caret"><use href="#caret" /></svg></button>
      <div class="zoom">
        <button aria-label="Zoom out"><svg><use href="#zoomout" /></svg></button>
        <input v-model="zoom" type="range" min="0" max="100" aria-label="Zoom" />
        <button aria-label="Zoom in"><svg><use href="#zoomin" /></svg></button>
      </div>
    </footer>
  </div>
</template>

<style>
body { margin: 0; }
</style>

<style scoped>
* { box-sizing: border-box; }
.app { height: 100vh; display: flex; flex-direction: column; overflow: hidden; background: #fff; color: #000; font: 12px/16px Lato, "Open Sans", sans-serif; }
button { border: 0; padding: 0; margin: 0; background: none; font: inherit; color: inherit; display: flex; align-items: center; justify-content: center; flex: none; }
svg { flex: none; display: block; }
.defs { position: absolute; width: 0; height: 0; }
.icons { display: none; }
h1, h2, h3, p, ul { margin: 0; padding: 0; font-weight: normal; list-style: none; }
.ic { width: 16px; height: 16px; }
.caret { width: 7px; height: 4px; }

.titlebar { flex: none; height: 24px; display: flex; align-items: center; padding: 0 3px 0 2px; }
.titlebar h1 { flex: 1; font-size: 12px; padding-left: 4px; }
.logo-small { width: 16px; height: 10px; }
.window-buttons { display: flex; align-self: start; }
.window-buttons button { width: 45px; height: 20px; }
.window-buttons svg { width: 11px; height: 11px; }

.menubar { flex: none; height: 19px; padding: 0 7px; display: flex; gap: 14px; align-items: start; border-bottom: 2px solid #eee; }
.menubar button { display: block; line-height: 17px; }

.toolbar { flex: none; height: 81px; display: flex; background: linear-gradient(#fff, #dadada); border-bottom: 1px solid #9c9c9c; color: #000; }
.group { flex: none; background: linear-gradient(#b2b5bd, #b2b5bd) right top 2px / 1px 75px no-repeat; }
.group h2 { height: 20px; font: 11px/18px "Liberation Sans", Arial, sans-serif; display: flex; justify-content: center; align-items: start; gap: 4px; }
.row { display: flex; height: 24px; margin-bottom: 2px; padding: 0 4px; align-items: center; }
.row.spaced { gap: 1px; }
.tool { width: 24px; height: 24px; }
.tool.wide { width: 36px; justify-content: flex-start; padding-left: 4px; gap: 5px; }
.tool.tight { width: 31px; justify-content: flex-start; padding-left: 4px; gap: 2px; }
.tool.faded .caret { color: #9b9b9b; }
.tool span { font: 11px/16px Roboto, sans-serif; }
.g-prism { width: 51px; }
.g-file { width: 64px; }
.g-sheet { width: 105px; }
.g-undo { width: 44px; }
.g-clip { width: 80px; }
.g-analysis { width: 128px; }
.g-analysis .tool:has(span) { width: 66px; justify-content: flex-start; padding-left: 4px; gap: 1px; }
.g-interpret { width: 66px; }
.g-change { width: 104px; }
.g-change .row { justify-content: flex-end; gap: 6px; }
.g-change .row:last-child { padding-right: 10px; }
.g-draw { width: 80px; }
.g-write { width: 88px; }
.g-text { width: 301px; }
.g-export { width: 50px; }
.g-print { width: 32px; }
.g-send { width: 96px; }
.g-help { width: 56px; }
.g-cloud { width: 105px; }
.big { width: 100%; height: 44px; }
.logo-large { width: 32px; height: 18px; }
.g-prism .big { position: relative; }
.logo-caret { position: absolute; right: 8px; top: 18px; width: 6px; }
.checklist { width: 24px; height: 30px; }
.export { width: 32px; height: 32px; }
.combo { position: relative; flex: none; width: 171px; height: 21px; margin-right: 2px; }
.combo.small { width: 41px; }
.combo select { appearance: none; width: 100%; height: 100%; border: 1px solid #c6c6c6; border-radius: 0; background: linear-gradient(#efefef, #efefef) 2px 2px / calc(100% - 20px) 15px no-repeat #fff; opacity: 1; }
.combo svg { position: absolute; right: 4px; top: 6px; width: 10px; height: 10px; color: #8f8f8f; }
.dot { width: 9px; height: 9px; margin-top: 4px; }
.cloud-row { display: flex; align-items: center; height: 46px; padding: 0 6px; justify-content: space-between; }
.publish { font: 11px/16px Roboto, sans-serif; gap: 3px; }
.account svg { width: 24px; height: 24px; }
.brand { flex: none; width: 72px; padding: 26px 0 0 3px; align-self: start; display: grid; justify-items: start; color: #a3a3a3; font-family: Roboto, "Liberation Sans", sans-serif; }
.brand small { justify-self: end; font-size: 8px; line-height: 8px; font-weight: bold; padding-right: 3px; }
.brand i { font-style: normal; font-weight: normal; }
.brand strong { font-size: 26px; line-height: 16px; }

.workspace { flex: 1; min-height: 0; display: grid; grid-template-columns: 234px 5px minmax(0, 1fr); border-bottom: 1px solid #a9a9bb; }
.sidebar { min-height: 0; display: grid; grid-template-rows: 34px minmax(0, 325fr) 7px minmax(0, 353fr); border-right: 1px solid #9c9c9c; background: #fff; font-family: "Noto Sans", sans-serif; }
.search { background: #efefef; padding: 5px; position: relative; }
.search input { width: 100%; height: 23px; border: 1px solid #7a7a7a; border-radius: 0; padding: 0 24px 0 5px; font: 12px/16px Lato, sans-serif; background: #fff; outline: 0; }
.search input::placeholder { color: #5c5c5c; }
.search button { position: absolute; right: 7px; top: 6px; width: 14px; height: 21px; color: #444; }
.search svg { width: 10px; height: 10px; }
.tree-wrap { display: flex; min-height: 0; overflow: hidden; }
.tree { flex: 1; min-width: 0; overflow: hidden; }
h3 { height: 22px; border-top: 1px solid #c2c2c2; display: flex; align-items: start; font-size: 13px; line-height: 18px; }
.tree h3 svg { width: 10px; height: 10px; margin: 5px 7px 0 5px; color: #555; }
h3 span { flex: 1; }
h3 button { font-size: 13px; line-height: 18px; font-weight: 600; margin-right: 5px; }
.item { width: 100%; height: 22px; padding-left: 22px; justify-content: flex-start; gap: 5px; font-size: 11px; white-space: nowrap; }
.item svg { width: 16px; height: 16px; }
.item.bold { font-weight: bold; }
.item.new { font-size: 12px; font-style: italic; }
.item.active { background: #eee; }
.item.nested { padding-left: 41px; }
.family h3 { padding-left: 21px; border-top-color: #ccc; }
.vscroll { width: 16px; background: #f0f0f0; display: flex; flex-direction: column; align-items: center; color: #505050; }
.vscroll svg { width: 10px; height: 10px; margin: 3px 0 4px; }
.vscroll .thumb { width: 15px; background: #cdcdcd; flex: none; height: 255px; margin-bottom: auto; }
.hsplit { background: #a6a6a6; border-top: 1px solid #707070; border-bottom: 1px solid #707070; display: flex; justify-content: center; align-items: center; }
.hsplit span { width: 26px; height: 3px; border: solid #555; border-width: 1px 0; }
.vsplit { display: grid; grid-template-rows: 359fr 360fr; background: #f3f3f3; }
.vsplit div { display: flex; align-items: center; justify-content: center; border-bottom: 1px solid #b5b5b5; }
.vsplit div:last-child { border: 0; }
.vsplit span { width: 3px; height: 26px; border: solid #9c9c9c; border-width: 0 1px; }

.content { min-width: 0; min-height: 0; display: grid; grid-template: 33px minmax(0, 1fr) 16px / minmax(0, 1fr) 16px; border-left: 1px solid #9c9c9c; font-family: "Liberation Sans", Arial, sans-serif; }
.tabs { grid-column: 1 / -1; display: flex; align-items: end; border-bottom: 1px solid #9c9c9c; padding-left: 8px; }
.tab { height: 27px; margin-bottom: -1px; width: 133px; justify-content: flex-start; padding-left: 8px; gap: 3px; background: #f0f0f0; border: 1px solid #9c9c9c; border-bottom: 0; border-radius: 10px 10px 0 0; font: bold 12px/16px Roboto, sans-serif; color: #222; }
.tab svg { width: 16px; height: 16px; }
.tab-menu { width: 26px; height: 24px; color: #777; }
.tab-menu svg { width: 10px; height: 10px; }
.tab-end { width: 1px; height: 15px; margin: 0 0 5px 4px; background: #999; }

.view { position: relative; min-width: 0; overflow: hidden; }
table { table-layout: fixed; border-collapse: separate; border-spacing: 0; width: 1702px; font-size: 13px; line-height: 16px; }
.c-num { width: 32px; }
.c-label { width: 332px; }
.c-a { width: 123px; }
.c-x { width: 81px; }
th, td { padding: 0; overflow: hidden; white-space: nowrap; }
thead th { background: #f0f0f0; border: solid #bcc1c6; border-width: 0 1px 1px 0; color: #85898f; }
.letters { height: 22px; }
.letters th:not([rowspan]) { height: 22px; padding-top: 1px; }
.titles th { height: 23px; background: #fff; font-weight: normal; color: #000; }
.subs th { height: 21px; }
thead .corner { border-right: 0; }
.corner svg { width: 16px; height: 16px; margin: 0 0 5px 9px; }
thead .name { color: #000; font-weight: normal; border-right-width: 2px; line-height: 13px; }
.name b { display: block; font-size: 12px; color: #0000b4; }
.name span { display: block; font-size: 11px; }
.select-all svg { width: 9px; height: 10px; margin: 5px 2px 0 auto; }
.subs .sub-name { border-right: 2px solid #ee8a8c; }
.subs .hot { background: #f6c7c9; border-color: #ea8587; box-shadow: inset 0 1px #ea8587; }
tbody th { height: 22px; background: #f0f0f0; border: solid #bcc1c6; border-width: 0 1px 1px 0; color: #85898f; }
tbody th.current { background: #f6c7c9; border-color: #ea8587; color: #b8686c; }
tbody td { height: 22px; border-right: 1px solid #ee8f90; border-bottom: 1px solid #fcdcd0; }
td.label { border-right: 2px solid #fcdcd0; padding-left: 24px; }
td.label.by-cursor { border-right-color: #ea8587; }
td.head { padding-left: 4px; font-weight: bold; }
td.value { padding-left: 4px; }
td.cursor { box-shadow: inset 0 -1px #ea8587, inset -1px 0 #ea8587; border-bottom-color: #ea8587; }

.note { position: absolute; right: 0; bottom: 0; width: 566px; border: 1px solid #c8960a; background: #fff8cc; font-size: 14px; line-height: 16px; }
.note-bar { height: 18px; display: flex; justify-content: space-between; padding: 2px 3px; background: linear-gradient(#ffe94a, #f5cd1c 50%, #e8b400); border-bottom: 1px solid #c8960a; }
.note-bar button { width: 12px; height: 13px; border: 1px solid #fff6c0; background: #eeb42a; box-shadow: 1px 1px #8a6a10; }
.note-bar svg { width: 10px; height: 11px; }
.note-frame { padding: 0 3px 3px; background: repeating-linear-gradient(90deg, #d9bf63 0 2px, #fff3c4 2px 4px) bottom / 100% 3px no-repeat, repeating-linear-gradient(#d9bf63 0 2px, #fff3c4 2px 4px); }
.note-body { height: 104px; padding: 0 2px 3px; background: #fff8cc; display: flex; flex-direction: column; justify-content: space-between; }
.note-body p { white-space: nowrap; }
.note-body a { display: flex; gap: 6px; align-items: center; color: #0b0be8; text-decoration: none; font: 12px/16px Lato, sans-serif; }
.note-body a svg { width: 16px; height: 16px; }

.main-v { border-left: 1px solid #fff; }
.main-v .thumb { height: 253px; }
.hscroll { background: #f0f0f0; border-top: 1px solid #fff; display: flex; align-items: center; justify-content: space-between; color: #505050; padding: 0 4px; }
.hscroll svg { width: 10px; height: 10px; }
.hscroll .thumb { flex: 0 1 1000px; height: 15px; background: #cdcdcd; margin: 0 auto 0 3px; }
.scroll-corner { background: #f0f0f0; }

.status { flex: none; height: 36px; border-top: 4px solid #f8f8fb; display: flex; align-items: center; background: linear-gradient(90deg, #fafafa, #ebecef 400px, #d9dadf 800px); box-shadow: inset 0 1px #a9a9bb; padding: 0 12px 2px 0; }
.sbtn { width: 16px; height: 16px; margin-right: 10px; }
.status svg:not(.caret) { width: 16px; height: 16px; }
.sbtn.first { margin: 0 139px 0 7px; }
.sbtn:nth-child(4) { margin-right: 8px; }
.rule { width: 1px; height: 24px; background: #a9a9b3; }
.rule.light { background: #b9bac0; box-shadow: 1px 0 #eee; }
.sbtn.grid { margin: 0 8px 0 6px; }
.sheet-tabs { display: flex; align-self: start; height: 28px; border-left: 1px solid #a3a3bb; border-radius: 0 0 0 5px; }
.sheet-tabs button { width: 31px; height: 28px; padding-bottom: 2px; background: #e7e7f1; border: solid #a3a3bb; border-width: 1px 1px 1px 0; border-radius: 0 0 5px 5px; }
.sheet-tabs .on { background: #f8f8fb; border-top-color: #f8f8fb; }
.sheet-select { position: relative; width: 174px; height: 22px; margin-left: 4px; }
.sheet-select select { appearance: none; width: 100%; height: 100%; border: 1px solid #777; border-radius: 0; background: #fff; padding: 0 18px 0 5px; font: 11px/16px Roboto, sans-serif; color: #000; }
.status .sheet-select svg { position: absolute; right: 4px; top: 6px; width: 10px; height: 10px; color: #444; }
.chain { gap: 0; margin: 0 8px 0 10px; }
.page { width: 152px; justify-content: space-between; font: 11px/16px Roboto, sans-serif; margin-left: 9px; padding-right: 8px; }
.zoom { margin-left: auto; display: flex; align-items: center; border-left: 1px solid #a9a9b3; height: 24px; padding-left: 8px; gap: 11px; }
.zoom input { appearance: none; width: 70px; height: 20px; margin: 0; background: linear-gradient(#eee, #eee) center / 100% 3px no-repeat; }
.zoom input::-webkit-slider-thumb { appearance: none; width: 11px; height: 20px; background: #0078d7; clip-path: polygon(0 0, 100% 0, 100% 75%, 50% 100%, 0 75%); }
</style>
